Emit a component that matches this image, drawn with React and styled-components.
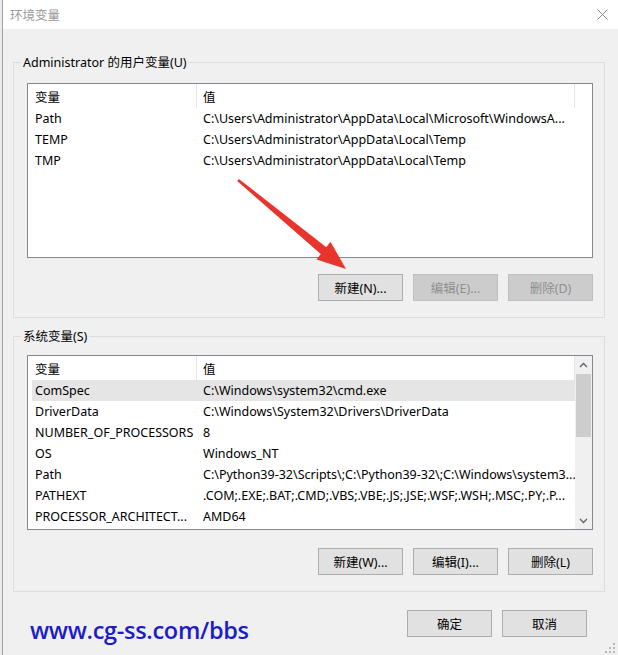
import React from "react";
import styled, { createGlobalStyle } from "styled-components";

const GlobalStyle = createGlobalStyle`
  html, body {
    margin: 0;
    padding: 0;
  }
  body {
    width: 618px;
    height: 655px;
    overflow: hidden;
    background: #e8ebee;
    font-family: "Noto Sans", "Noto Sans CJK SC", sans-serif;
    font-size: 12.5px;
    color: #000;
  }
`;

const userVars = [
  ["Path", "C:\\Users\\Administrator\\AppData\\Local\\Microsoft\\WindowsA..."],
  ["TEMP", "C:\\Users\\Administrator\\AppData\\Local\\Temp"],
  ["TMP", "C:\\Users\\Administrator\\AppData\\Local\\Temp"],
];

const sysVars = [
  ["ComSpec", "C:\\Windows\\system32\\cmd.exe"],
  ["DriverData", "C:\\Windows\\System32\\Drivers\\DriverData"],
  ["NUMBER_OF_PROCESSORS", "8"],
  ["OS", "Windows_NT"],
  ["Path", "C:\\Python39-32\\Scripts\\;C:\\Python39-32\\;C:\\Windows\\system3..."],
  ["PATHEXT", ".COM;.EXE;.BAT;.CMD;.VBS;.VBE;.JS;.JSE;.WSF;.WSH;.MSC;.PY;.P..."],
  ["PROCESSOR_ARCHITECT...", "AMD64"],
];

const Screen = styled.div`
  position: relative;
  width: 618px;
  height: 655px;
  display: flex;
`;

const Window = styled.div`
  flex: 1;
  margin-left: 2px;
  border-left: 1px solid #a3a3a3;
  display: flex;
  flex-direction: column;
  background: #f0f0f0;
`;

const TitleBar = styled.div`
  height: 29px;
  flex-shrink: 0;
  background: #fff;
  display: flex;
  align-items: center;
  justify-content: space-between;
  padding: 0 10px 0 7px;
  color: #999;
`;

const Content = styled.div`
  padding: 25px 13px 0 10px;
`;

const GroupBox = styled.fieldset`
  margin: ${(p) => p.$mt || 0}px 0 0;
  border: 1px solid #dcdcdc;
  padding: ${(p) => p.$pt}px 11px 16px 13px;
  min-width: 0;
`;

const Legend = styled.legend`
  margin-left: -6px;
  padding: 0 2px;
  line-height: 17px;
`;

const ListView = styled.div`
  height: 175px;
  box-sizing: border-box;
  border: 1px solid #828790;
  background: #fff;
  display: flex;
`;

const ListBody = styled.div`
  flex: 1;
  min-width: 0;
  display: flex;
  flex-direction: column;
`;

const HeaderRow = styled.div`
  height: 24px;
  flex-shrink: 0;
  display: grid;
  grid-template-columns: 169px 378px;
`;

const HeaderCell = styled.div`
  display: flex;
  align-items: center;
  padding-left: ${(p) => p.$pl}px;
  border-right: 1px solid #e5e5e5;
`;

const Row = styled.div`
  height: 21px;
  flex-shrink: 0;
  margin-left: 4px;
  display: grid;
  grid-template-columns: 165px 1fr;
  align-items: center;
  background: ${(p) => (p.$selected ? "#e5e5e5" : "transparent")};
`;

const Cell = styled.div`
  padding-left: ${(p) => p.$pl}px;
  white-space: nowrap;
  overflow: hidden;
`;

const ScrollBar = styled.div`
  width: 17px;
  flex-shrink: 0;
  background: #f0f0f0;
  display: flex;
  flex-direction: column;
`;

const ScrollArrow = styled.div`
  height: 17px;
  display: flex;
  align-items: center;
  justify-content: center;
`;

const ScrollTrack = styled.div`
  flex: 1;
`;

const ScrollThumb = styled.div`
  margin: 1px 1px 0;
  height: 63px;
  background: #cdcdcd;
`;

const ButtonRow = styled.div`
  display: flex;
  justify-content: flex-end;
  gap: 10px;
  margin-top: ${(p) => p.$mt}px;
`;

const Button = styled.button`
  width: 85px;
  height: 27px;
  box-sizing: border-box;
  padding: 0;
  font-family: inherit;
  font-size: 12.5px;
  color: ${(p) => (p.disabled ? "#8f8f8f" : "#000")};
  background: ${(p) => (p.disabled ? "#cccccc" : "#e1e1e1")};
  border: 1px solid ${(p) => (p.disabled ? "#bfbfbf" : "#adadad")};
  border-radius: 0;
`;

const BottomBar = styled.div`
  display: flex;
  justify-content: space-between;
  align-items: flex-start;
  margin-top: 18px;
  padding: 0 18px 0 17px;
`;

const Watermark = styled.div`
  margin-top: 5px;
  font-family: "Open Sans", sans-serif;
  font-size: 23.5px;
  font-weight: 600;
  line-height: 30px;
  letter-spacing: -0.3px;
  color: #1c1ccc;
`;

const DialogButtons = styled.div`
  display: flex;
  gap: 10px;
`;

const Grip = styled.svg`
  position: absolute;
  right: 3px;
  bottom: 2px;
`;

const Overlay = styled.svg`
  position: absolute;
  left: 0;
  top: 0;
  pointer-events: none;
`;

const Chevron = ({ up }) => (
  <svg width="9" height="6" viewBox="0 0 9 6">
    <polyline
      points={up ? "1,5 4.5,1.5 8,5" : "1,1 4.5,4.5 8,1"}
      fill="none"
      stroke="#606060"
      strokeWidth="1.3"
    />
  </svg>
);

const VarList = ({ rows, selected, scroll }) => (
  <ListView>
    <ListBody>
      <HeaderRow>
        <HeaderCell $pl={7}>变量</HeaderCell>
        <HeaderCell $pl={6}>值</HeaderCell>
      </HeaderRow>
      {rows.map(([name, value], i) => (
        <Row key={name + i} $selected={i === selected}>
          <Cell $pl={3}>{name}</Cell>
          <Cell $pl={6}>{value}</Cell>
        </Row>
      ))}
    </ListBody>
    {scroll && (
      <ScrollBar>
        <ScrollArrow>
          <Chevron up />
        </ScrollArrow>
        <ScrollTrack>
          <ScrollThumb />
        </ScrollTrack>
        <ScrollArrow>
          <Chevron />
        </ScrollArrow>
      </ScrollBar>
    )}
  </ListView>
);

export default function App() {
  return (
    <>
      <GlobalStyle />
      <Screen>
        <Window>
          <TitleBar>
            <span>环境变量</span>
            <svg width="11" height="11" viewBox="0 0 11 11">
              <path d="M0.5 0.5 L10.5 10.5 M10.5 0.5 L0.5 10.5" stroke="#8a8a8a" strokeWidth="1" />
            </svg>
          </TitleBar>
          <Content>
            <GroupBox $pt={12}>
              <Legend>Administrator 的用户变量(U)</Legend>
              <VarList rows={userVars} selected={-1} />
              <ButtonRow $mt={16}>
                <Button>新建(N)...</Button>
                <Button disabled>编辑(E)...</Button>
                <Button disabled>删除(D)</Button>
              </ButtonRow>
            </GroupBox>
            <GroupBox $mt={10} $pt={10}>
              <Legend>系统变量(S)</Legend>
              <VarList rows={sysVars} selected={0} scroll />
              <ButtonRow $mt={18}>
                <Button>新建(W)...</Button>
                <Button>编辑(I)...</Button>
                <Button>删除(L)</Button>
              </ButtonRow>
            </GroupBox>
            <BottomBar>
              <Watermark>www.cg-ss.com/bbs</Watermark>
              <DialogButtons>
                <Button>确定</Button>
                <Button>取消</Button>
              </DialogButtons>
            </BottomBar>
          </Content>
        </Window>
        <Grip width="10" height="10" viewBox="0 0 10 10">
          {[
            [8, 0],
            [8, 4],
            [4, 4],
            [8, 8],
            [4, 8],
            [0, 8],
          ].map(([x, y]) => (
            <rect key={x + "-" + y} x={x} y={y} width="2" height="2" fill="#b8b8b8" />
          ))}
        </Grip>
        <Overlay width="618" height="655" viewBox="0 0 618 655">
          <polygon
            points="238.8,178.9 237.2,181.1 322.2,255.2 327.6,248.2"
            fill="#e8342c"
          />
          <polygon points="346,269 316.5,259.5 330.5,241.8" fill="#e8342c" />
        </Overlay>
      </Screen>
    </>
  );
}
